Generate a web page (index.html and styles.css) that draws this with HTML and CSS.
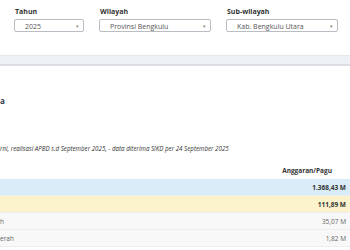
FILE: index.html
```html
<!DOCTYPE html>
<html lang="id">
<head>
  <meta charset="UTF-8">
  <title>Realisasi APBD</title>
  <link rel="stylesheet" href="styles.css">
</head>
<body>
  <div class="filters">
    <div class="filter filter-year">
      <label>Tahun</label>
      <div class="select">2025<span class="caret">▾</span></div>
    </div>
    <div class="filter filter-region">
      <label>Wilayah</label>
      <div class="select">Provinsi Bengkulu<span class="caret">▾</span></div>
    </div>
    <div class="filter filter-region">
      <label>Sub-wilayah</label>
      <div class="select">Kab. Bengkulu Utara<span class="caret">▾</span></div>
    </div>
  </div>
  <div class="band"></div>

  <div class="content">
    <h3 class="title"><span class="cut">Ringkasan Realisasi APBD Kabupaten Bengkulu Utar</span>a</h3>
    <p class="note"><span class="cut">Keterangan: anggaran mu</span>rni, realisasi APBD s.d September 2025, - data diterima SIKD per 24 September 2025</p>

    <table class="summary">
      <thead>
        <tr>
          <th class="name"></th>
          <th class="num">Anggaran/Pagu</th>
        </tr>
      </thead>
      <tbody>
        <tr class="row-total">
          <td class="name"><span class="cut">Pendapatan Daerah</span></td>
          <td class="num">1.368,43 M</td>
        </tr>
        <tr class="row-group">
          <td class="name"><span class="cut">Pendapatan Asli Daerah</span></td>
          <td class="num">111,89 M</td>
        </tr>
        <tr class="row-item">
          <td class="name"><span class="cut">Pajak Daera</span>h</td>
          <td class="num">35,07 M</td>
        </tr>
        <tr class="row-item">
          <td class="name"><span class="cut">Hasil Pengelolaan Kekayaan Da</span>erah</td>
          <td class="num">1,82 M</td>
        </tr>
      </tbody>
    </table>
  </div>
</body>
</html>
```

FILE: styles.css
```css
body {
  font-family: "Open Sans", "Liberation Sans", sans-serif;
  background-color: #fff;
  color: #333;
  margin: 0;
  padding: 0;
  overflow: hidden;
}
.filters {
  display: flex;
  gap: 15px;
  padding: 7px 0 0 14px;
  height: 48px;
  border-bottom: 1px solid #e6e8ec;
}
.filter label {
  display: block;
  font-size: 7px;
  font-weight: bold;
  color: #333;
  line-height: 9px;
  margin: 0 0 3px 1px;
}
.filter-year {
  width: 70px;
}
.filter-region {
  width: 112px;
}
.select {
  position: relative;
  height: 13px;
  line-height: 13px;
  box-sizing: border-box;
  border: 1px solid #b9bcc2;
  border-radius: 2px;
  padding-left: 10px;
  font-size: 7px;
  color: #555;
}
.caret {
  position: absolute;
  right: 4px;
  top: 0;
  font-size: 5px;
  color: #888;
}
.band {
  height: 8px;
  background-color: #edf0f4;
  border-bottom: 2px solid #dcdee3;
}
/* the page is scrolled sideways: hidden start of a text hangs left of the edge */
.cut {
  display: inline-flex;
  justify-content: flex-end;
  width: 0;
  white-space: nowrap;
}
.title {
  font-size: 8px;
  font-weight: bold;
  color: #2f3a4f;
  margin: 30px 0 0 0;
  line-height: 10px;
  white-space: nowrap;
}
.note {
  font-size: 6.2px;
  font-style: italic;
  color: #333;
  margin: 38px 0 0 0;
  line-height: 10px;
  white-space: nowrap;
}
.summary {
  width: 100%;
  border-collapse: collapse;
  margin-top: 8px;
  font-size: 6.5px;
}
.summary th {
  font-weight: bold;
  height: 17px;
  padding: 0;
}
.summary th.num {
  text-align: right;
  padding-right: 18px;
}
.summary td {
  height: 16px;
  padding: 0;
  border-bottom: 1px solid #eceef0;
  color: #666;
  white-space: nowrap;
}
.summary td.num {
  text-align: right;
  padding-right: 4px;
}
.row-total td {
  background-color: #d9ecf7;
  font-weight: bold;
  color: #333;
}
.row-group td {
  background-color: #fcf2cc;
  font-weight: bold;
  color: #333;
}
.row-item td {
  background-color: #f8f8f8;
}
```
